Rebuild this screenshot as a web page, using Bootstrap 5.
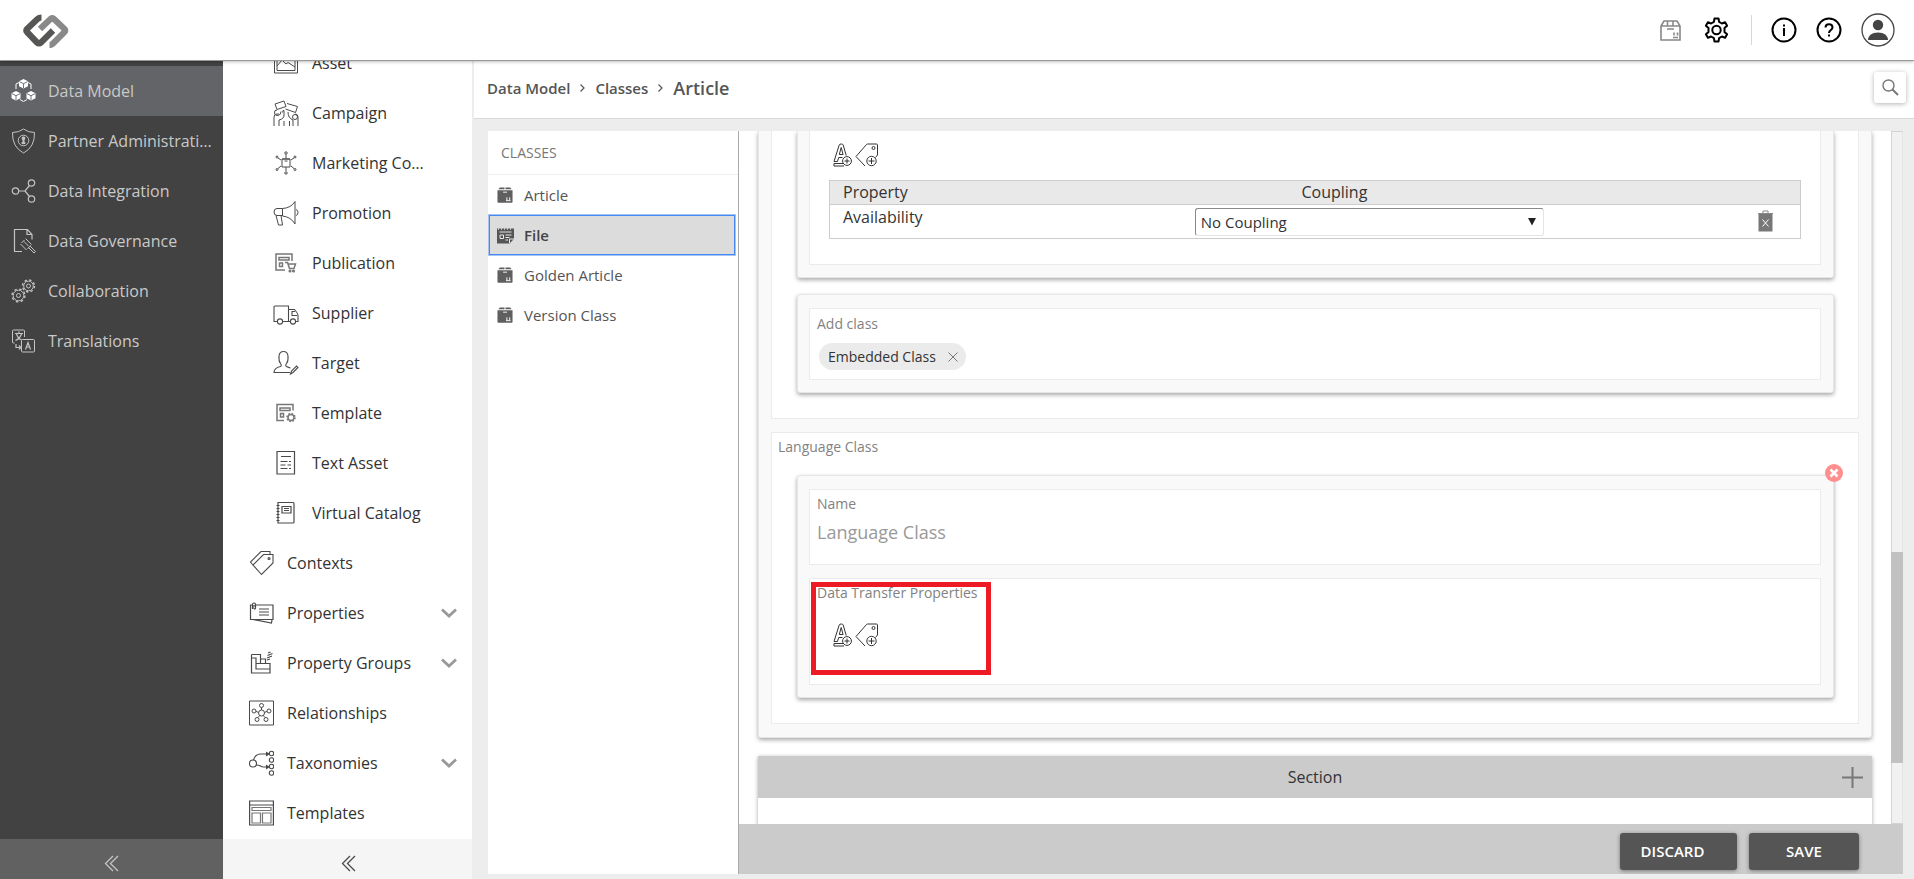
<!DOCTYPE html>
<html lang="en">
<head>
<meta charset="utf-8">
<meta name="viewport" content="width=device-width, initial-scale=1">
<title>Data Model - Classes - Article</title>
<link href="https://cdn.jsdelivr.net/npm/bootstrap@5.3.0/dist/css/bootstrap.min.css" rel="stylesheet">
<style>
body { font-family: "Open Sans", "Noto Sans", sans-serif; font-size: 16px; line-height: 24px; color: #333; background: #ededed; }
svg { fill: none; flex: none; display: block; }
svg:not([stroke]) { stroke: currentColor; }
a { color: inherit; text-decoration: none; }
button { color: inherit; }
.plain-btn { background: none; border: 0; padding: 0; }
.topbar { height: 61px; background: #fff; border-bottom: 1px solid #999; box-shadow: 0 1px 3px rgba(0,0,0,.25); z-index: 5; position: relative; padding: 0 19px 0 20px; }
.topbar-tools { gap: 19px; }
.topbar-divider { width: 1px; height: 30px; background: #d8d8d8; margin-left: 3px; }
.side-main { width: 223px; background: #424242; color: #c9c9c9; }
.side-main .entries { padding-top: 5px; }
.side-main a { height: 50px; padding: 0 8px 0 11px; gap: 12px; }
.side-main a.active { background: #636467; }
.side-main svg { color: #c4c4c4; }
.side-main a.active svg { color: #fff; }
.fold-btn { height: 40px; background: #616161; color: #bbb; border: 0; padding-top: 10px; }
.side-sub { width: 249px; background: #fff; }
.side-sub .entries { padding-bottom: 1px; }
.side-sub a { height: 50px; padding: 0 15px 0 26px; gap: 13px; flex: none; }
.side-sub a.nested { padding: 0 40px 0 50px; }
.side-sub svg { color: #4a4a4a; }
.side-sub svg.caret { color: #999; margin-left: auto; }
.side-sub .fold-btn { height: 41px; background: #f5f5f5; color: #777; padding-left: 8px; }
.crumbs { height: 58px; background: #fff; border-bottom: 1px solid #d9d9d9; margin-left: 2px; padding: 0 8px 4px 13px; color: #555; font-size: 15px; font-weight: 600; gap: 10px; }
.crumbs .current { font-size: 18px; }
.search-btn { width: 32px; height: 31px; border: 0; border-radius: 3px; background: #fff; color: #777; box-shadow: 0 1px 5px rgba(0,0,0,.3); }
.work { padding: 12px 11px 5px 16px; }
.class-panel { width: 251px; background: #fff; border-right: 1px solid #aaa; color: #555; font-size: 15px; }
.class-panel h2 { font-size: 14px; line-height: 44px; height: 44px; color: #777; padding-left: 13px; border-bottom: 1px solid #eee; margin: 0; font-weight: 400; }
.class-panel a { height: 40px; padding-left: 9px; gap: 11px; margin-right: 1px; }
.class-panel a.active { background: #dcdcdc; border: 2px solid #4688f1; outline: 1px solid #a5c3f5; outline-offset: -1px; padding-left: 7px; gap: 10px; height: 42px; margin: -1px 2px -1px 0; font-weight: 600; color: #444; }
.canvas { background: #fff; padding: 0 19px; }
.panel-card { background: #f9f9f9; border: 1px solid #e6e6e6; border-radius: 3px; box-shadow: 0 2px 4px rgba(0,0,0,.34); }
.panel-card.outer { padding: 0 12px 13px; border-top: 0; border-radius: 0 0 3px 3px; margin-bottom: 18px; }
.panel-card.inner { padding: 13px 12px 12px 11px; margin: 0 24px 0 25px; }
.panel-card.inner.cut { border-top: 0; padding-top: 0; border-radius: 0 0 3px 3px; }
.field-box { background: #fff; border: 1px solid #ebebeb; }
.field-box.cut { border-top: 0; }
.group-box { padding-bottom: 25px; }
.group-box + .group-box { margin-top: 13px; }
.group-label { padding: 4px 6px 18px; }
.table-field { padding: 12px 19px 25px; }
.chip-field { padding: 5px 7px 9px; }
.chip-field .field-label { margin-bottom: 5px; }
.name-field { padding: 4px 7px 19px; }
.transfer-field { padding: 4px 7px 37px; margin-top: 13px; }
.transfer-field .icon-row { margin: 20px 0 0 16px; }
.table-field .icon-row { margin: 0 0 13px 4px; }
.field-label { display: block; font-size: 14px; line-height: 20px; color: #828282; font-weight: 400; margin: 0; }
.icon-row { gap: 3px; color: #333; }
.name-input { border: 0; padding: 0; width: 100%; font-size: 18px; line-height: 26px; color: #999; background: none; margin-top: 5px; }
.name-input::placeholder { color: #999; opacity: 1; }
.chip { background: #ebebeb; border-radius: 14px; height: 27px; font-size: 14px; margin: 4px 0 0 2px; padding: 0 8px 0 9px; gap: 12px; color: #333; }
.prop-table { table-layout: fixed; width: 100%; border: 1px solid #ccc; border-collapse: collapse; margin: 0; }
.prop-table th { background: #e9e9e9; font-weight: 400; height: 24px; padding: 0; border-bottom: 1px solid #ccc; line-height: 23px; }
.prop-table td { height: 34px; padding: 0; vertical-align: top; }
.prop-table th:first-child, .prop-table td:first-child { padding-left: 13px; }
.prop-table td.select-cell { padding: 3px 4px 0 6px; }
.prop-table select { appearance: none; display: block; width: 100%; height: 28px; border: 1px solid #e4e4e4; border-top-color: #888; border-left-color: #888; border-radius: 3px; background: #fff; font-size: 15px; padding: 0 5px; color: #333; }
.select-arrow { position: absolute; right: 8px; top: 9px; width: 8px; height: 9px; }
.trash-btn { margin: 4px 27px 0 auto; }
.remove-badge { position: absolute; top: -12px; right: -10px; width: 18px; height: 18px; }
.highlight { position: absolute; left: 1px; top: 3px; width: 180px; height: 93px; border: 5px solid #ed1c24; }
.section-head { background: #cbcbcb; height: 42px; padding: 0 9px 0 30px; color: #333; }
.section-card { background: #fff; box-shadow: 0 1px 4px rgba(0,0,0,.35); height: 120px; flex: none; }
.scroll-track { width: 12px; background: #f1f1f1; border: 1px solid #d3d3d3; border-right-color: #e4e4e4; padding-top: 420px; }
.scroll-thumb { height: 211px; margin: 0 -1px; background: #c1c1c1; }
.action-bar { height: 50px; background: #cbcbcb; padding: 9px 44px 0 0; gap: 12px; }
.action-bar button { height: 37px; border: 0; border-radius: 3px; background: #555; color: #fff; font-size: 15px; font-weight: 600; padding: 0 0 2px; box-shadow: 0 1px 4px rgba(0,0,0,.4); }
.action-bar .btn-discard { width: 117px; padding-right: 12px; }
.action-bar .btn-save { width: 110px; }
</style>
</head>
<body class="vh-100 overflow-hidden d-flex flex-column">

<svg width="0" height="0" class="position-absolute" aria-hidden="true">
  <symbol id="carton" viewBox="0 0 17 17"><path d="M3 .5h5v2H1.500z M9 .5h5l1.500 2H9z M.5 3.500h16V16a.8.8 0 0 1-.8.8H1.300a.8.800 0 0 1-.8-.8z" fill="#5f5f5f" stroke="none"/><path d="M6.500 5.500h4M10.500 11v3M13.500 11v3M9.500 14.500h5" stroke="#fff"/></symbol>
  <symbol id="add-attr" viewBox="0 0 19 24"><path d="M1 18.500 6.200 2Q6.500 1 8.200 1T10.200 2L13.200 12.500M1 18.500H4.500L5.700 14.500H9.500M6.300 11.500 8.200 4.500l1.900 7zM10 20.500H1V23h10"/><circle cx="14" cy="18" r="4.400"/><path d="M11.500 18h5M14 15.500v5"/></symbol>
  <symbol id="add-tag" viewBox="0 0 24 24"><path d="m10 23-9-9.500L11.500 1.500Q12 1 12.500 1H21.500q1 0 1 1v10l-2 2.500"/><circle cx="18.500" cy="5" r="1.500"/><circle cx="16.500" cy="18" r="4.700"/><path d="M13.500 18h6M16.500 15v6"/></symbol>
  <symbol id="caret" viewBox="0 0 16 10"><path d="m1 1.500 7 6.500 7-6.500" stroke-width="2.800"/></symbol>
  <symbol id="fold" viewBox="0 0 15 17"><path d="M9 1 1.500 8.500 9 16M14 1 6.500 8.500 14 16" stroke-width="1.300"/></symbol>
  <symbol id="sep" viewBox="0 0 5 9"><path d="M.5 1.500 4 5 .5 8.500" stroke-width="1.200"/></symbol>
</svg>

<header class="topbar d-flex align-items-center flex-shrink-0">
  <a href="#" aria-label="Home"><svg width="50" height="36" viewBox="0 0 50 36" stroke-width="6.200" stroke-linejoin="round"><path d="M29.500 33q2 0 3.500-1.500L44.500 20q1.500-1.500 0-3L34 7q-1.500-1.500-3.500 0L20 17" stroke="#898989"/><path d="M21.500 5.500q-2.500 0-4 1.500L7 17q-1.500 1.500 0 3l10 10.500q2 2 4 0L33 18.500" stroke="#565654"/></svg></a>
  <div class="topbar-tools d-flex align-items-center ms-auto">
    <button class="plain-btn me-1" aria-label="Package"><svg width="21" height="21" viewBox="0 0 21 21" stroke="#888" stroke-width="1.600"><path d="M4 1h13l3 5v14H1V6zM1 6h19M7.500 6V1M13 6V1M7 9h7M14 12.500v3M17.500 12.500v3M13 17.500h5"/></svg></button>
    <button class="plain-btn" aria-label="Settings"><svg width="25" height="26" viewBox="0 0 25 26" stroke="#000" stroke-width="2" stroke-linejoin="round"><path d="M10.500 1.500h4l.6 3.400 2.800 1.600 3.200-1.200 2 3.400-2.600 2.300v4l2.600 2.300-2 3.400-3.200-1.200-2.800 1.600-.6 3.400h-4l-.6-3.400-2.800-1.600-3.200 1.200-2-3.400L4.500 15v-4L1.900 8.700l2-3.400 3.200 1.200 2.800-1.600z"/><circle cx="12.500" cy="13" r="4.200"/></svg></button>
    <div class="topbar-divider"></div>
    <button class="plain-btn" aria-label="Information"><svg width="26" height="26" viewBox="0 0 26 26" stroke="#000" stroke-width="2"><circle cx="13" cy="13" r="11.500"/><path d="M13 11v8M13 7.500v2"/></svg></button>
    <button class="plain-btn" aria-label="Help"><svg width="26" height="26" viewBox="0 0 26 26" stroke="#000" stroke-width="2"><circle cx="13" cy="13" r="11.500"/><path d="M9.500 10.500c0-4.500 7-4.500 7 0 0 2.500-3.500 2.500-3.500 5.500M13 17.500v2"/></svg></button>
    <button class="plain-btn" aria-label="Account"><svg width="34" height="34" viewBox="0 0 34 34" stroke="#444" stroke-width="1.300"><circle cx="17" cy="17" r="16"/><circle cx="17" cy="12" r="5.200" fill="#444" stroke="none"/><path d="M7 27c0-4.500 4-7.500 10-7.500s10 3 10 7.500z" fill="#444" stroke="none"/></svg></button>
  </div>
</header>

<div class="d-flex flex-fill overflow-hidden">
  <nav class="side-main d-flex flex-column flex-shrink-0">
    <div class="entries flex-fill">
      <a href="#" class="active d-flex align-items-center"><svg width="25" height="24" viewBox="0 0 25 24"><path d="M8 3.500 5 5v5M17 3.500 20 5v5M9 20.500l3.500 2 3.500-2" /><path d="m12.500 0 4.500 2.200v5l-4.500 2.300L8 7.200v-5zM5 12l4.500 2.200v5L5 21.500.5 19.200v-5zM20 12l4.500 2.200v5L20 21.500l-4.500-2.300v-5z" fill="currentColor" stroke="none"/><path d="m8.500 2.700 4 2 4-2M12.500 4.700V9M1 14.700l4 2 4-2M5 16.700V21M16 14.700l4 2 4-2M20 16.700V21" stroke="#636467" stroke-width=".9"/></svg><span>Data Model</span></a>
      <a href="#" class="d-flex align-items-center"><svg width="25" height="26" viewBox="0 0 25 26"><path d="M12.500 1Q17 4.500 23.500 4.500 24 19 12.500 25 1 19 1.500 4.500 8 4.500 12.500 1z"/><circle cx="12.500" cy="12.500" r="5.300"/><path d="M12.500 8.500c2.500 0 2 2.500 1 3.600v2l1.500 1q-2.500 2.500-5 0l1.500-1v-2c-1-1.100-1.500-3.600 1-3.600z" fill="currentColor" stroke="none"/></svg><span class="text-truncate">Partner Administration</span></a>
      <a href="#" class="d-flex align-items-center"><svg width="25" height="24" viewBox="0 0 25 24" stroke-width="1.200"><circle cx="4.500" cy="12" r="3.200"/><circle cx="20.500" cy="4" r="3.200"/><circle cx="20.500" cy="20" r="3.200"/><path d="M7.700 12H14l4.500-5.500M14 12l4.500 5.500"/></svg><span>Data Integration</span></a>
      <a href="#" class="d-flex align-items-center"><svg width="25" height="26" viewBox="0 0 25 26"><path d="M11 23.500H3.500v-22h13l4.500 5v5M16 1.500v5h5" stroke-width="1.200"/><path d="m14.500 10.500 6 6M9.500 16l6 6M13.500 12 10.500 15M19.500 17.500l-3 3.500M17.500 19.500l5.500 5.500 1.500-1.500-5.500-5.500"/><path d="m13 13.500 4.500 4.500"/></svg><span>Data Governance</span></a>
      <a href="#" class="d-flex align-items-center"><svg width="25" height="24" viewBox="0 0 25 24"><circle cx="7.500" cy="16.500" r="5.300"/><circle cx="7.500" cy="16.500" r="2"/><circle cx="7.500" cy="16.500" r="6.400" stroke-width="1.400" stroke-dasharray="2.500 2.520"/><circle cx="17.500" cy="7" r="4.800"/><circle cx="17.500" cy="7" r="2"/><circle cx="17.500" cy="7" r="6" stroke-width="1.400" stroke-dasharray="2.350 2.360"/></svg><span>Collaboration</span></a>
      <a href="#" class="d-flex align-items-center"><svg width="25" height="24" viewBox="0 0 25 24"><path d="M13.500 8V2q0-1-1-1H2.500q-1 0-1 1v11q0 1 1 1h1"/><rect x="10.500" y="10.500" width="13" height="12.500" rx="1"/><path d="M4 4.500h8M8 2.500v2M10.500 5Q9 9.500 4.500 11.500M5.500 5q1.500 4.500 5 6M5 15v3.500h4M8 16.500l2 2-2 2M14.500 20.500l2.500-7 2.500 7M15.500 18h3" stroke-width="1.200"/></svg><span>Translations</span></a>
    </div>
    <button class="fold-btn d-flex justify-content-center align-items-center" aria-label="Collapse main menu"><svg width="15" height="17"><use href="#fold"/></svg></button>
  </nav>

  <nav class="side-sub d-flex flex-column flex-shrink-0">
    <div class="entries flex-fill d-flex flex-column justify-content-end overflow-hidden">
      <a href="#" class="nested d-flex align-items-center"><svg width="26" height="22" viewBox="0 0 26 22"><path d="M1.500 1.500h23v19.500h-23z"/><path d="M4 4h18v14.500H4zM4 14l5-6 4 4 2-1.500 7 4.500"/></svg><span>Asset</span></a>
      <a href="#" class="nested d-flex align-items-center"><svg width="26" height="26" viewBox="0 0 26 26"><path d="m2 4 9-3 2 5.500-9 3zM14 3.500l10.500 3-2 6L12.500 9M1 26v-9q0-3 3-3h2M6 26v-6q5-1 5-5V10.500q-1-1-1.500 2M11 26v-5M25 26v-9q0-3-3-3M20 26v-6q-5-2-5-8M16.500 26v-5M4 10q-3 0-2.500 3t3.500 2.500 3-4"/><circle cx="22" cy="17" r="2.500"/></svg><span>Campaign</span></a>
      <a href="#" class="nested d-flex align-items-center"><svg width="26" height="26" viewBox="0 0 26 26"><path d="M9 9h8v8H9zM9 9h8M11.500 11h3M13 9V4.500M13 17v4M8 10 5 8M18 10l3-2M8 16l-3 2.500M18 16l3 2.500"/><circle cx="13" cy="3" r="1.200"/><circle cx="13" cy="23" r="1.200"/><circle cx="4" cy="7" r="1"/><circle cx="22" cy="7" r="1"/><circle cx="4" cy="19.500" r="1"/><circle cx="22" cy="19.500" r="1"/></svg><span class="text-truncate">Marketing Content</span></a>
      <a href="#" class="nested d-flex align-items-center"><svg width="26" height="26" viewBox="0 0 26 26"><path d="M9.500 8.500Q18 8 22 1.500V24q-4-7-12.500-8zM9.500 8.500H4Q1 8.500 1 12t3 3.500h5.500M3 15.500 5.500 25h4L8 15.500M23 9.500q2 .5 2 3t-2 3"/></svg><span>Promotion</span></a>
      <a href="#" class="nested d-flex align-items-center"><svg width="26" height="26" viewBox="0 0 26 26" stroke="#777" stroke-width="1.500"><path d="M12 20H3V4h16v7M6 7.500h10v2.500H6zM6.500 13h3v3.500h-3zM12 12.500h2.500l2 6H21l1.500-4.500h-7" /><circle cx="17" cy="21" r=".8"/><circle cx="20.500" cy="21" r=".8"/></svg><span>Publication</span></a>
      <a href="#" class="nested d-flex align-items-center"><svg width="26" height="26" viewBox="0 0 26 26" stroke-width="1.100"><path d="M5 21.500H1V7q0-1 1-1h13.500v15.500M9.500 21.500H18M15.500 9.500h6q3.500 4 3.500 6v6h-2M24 15.500h-5v-4h3"/><circle cx="7" cy="21.500" r="2.600"/><circle cx="20" cy="21.500" r="2.600"/></svg><span>Supplier</span></a>
      <a href="#" class="nested d-flex align-items-center"><svg width="26" height="26" viewBox="0 0 26 26" stroke-width="1.100"><path d="M17 22.500H1q0-4.500 6.500-6 1.500-1 0-3Q5.500 11 6 6q.5-4.500 4.500-4.500T15 6q.5 5-1.500 7.500-1.500 2 0 3 2 1 4 1.500M17.500 24l1-3 5-5 1.500 1.500-5 5z"/></svg><span>Target</span></a>
      <a href="#" class="nested d-flex align-items-center"><svg width="26" height="26" viewBox="0 0 26 26" stroke="#777" stroke-width="1.500"><path d="M11 20.500H4V4.500h16v6M7 8h10v2.500H7zM7.500 13.500h3V17h-3z"/><circle cx="18" cy="17.500" r="3"/><circle cx="18" cy="17.500" r="4" stroke-dasharray="1.600 1.540"/></svg><span>Template</span></a>
      <a href="#" class="nested d-flex align-items-center"><svg width="26" height="26" viewBox="0 0 26 26"><path d="M4 1.500h17.500v22.500H4z" stroke-width="1.200"/><path d="M8 6.500h10M7.500 11.500h7M16 11.500h2M7.500 15h5M14.500 15h3.500M7.500 18.500h7M16 18.500h2" stroke-width="1.200"/></svg><span>Text Asset</span></a>
      <a href="#" class="nested d-flex align-items-center"><svg width="26" height="26" viewBox="0 0 26 26"><path d="M5 2.500h15q1 0 1 1V22q0 1-1 1H5zM9 6.500h9v6.500H9zM11 8.500h5M11 10.500h5" stroke-width="1.200"/><path d="M3.500 5.500h3M3.500 8.500h3M3.500 11.500h3M3.500 14.500h3M3.500 17.500h3M3.500 20.500h3"/></svg><span>Virtual Catalog</span></a>
      <a href="#" class="d-flex align-items-center"><svg width="25" height="26" viewBox="0 0 25 26" stroke-width="1.100"><path d="M12.500 24.500 4 15 14.500 4.500h9.500V13zM4 15l-2.500-3L12 1.500h9v3"/><circle cx="20" cy="8.500" r="1"/></svg><span>Contexts</span></a>
      <a href="#" class="d-flex align-items-center"><svg width="25" height="24" viewBox="0 0 25 24" stroke-width="1.200"><path d="M3 4H1.500v14.500H24V4H7M4 18.500 22.500 22l.5-3.500M10 8h10M10 11h10M10 14h10M3.500 8V3.500q0-1.500 1.500-1.500t1.500 1.500V7q0 1-.8 1T5 7V4"/></svg><span>Properties</span><svg class="caret" width="16" height="10"><use href="#caret"/></svg></a>
      <a href="#" class="d-flex align-items-center"><svg width="25" height="26" viewBox="0 0 25 26" stroke-width="1.200"><path d="M2.500 4.500h9V9h5v4.500M2.500 4.500v18.500h18.500v-4H7V8H2.500M7 13.500h14V19M11.500 9v4.500"/><path d="m18 8 5-2M18.500 5.500l5-2M19 3l2.500-1M18 10l3-1" /></svg><span>Property Groups</span><svg class="caret" width="16" height="10"><use href="#caret"/></svg></a>
      <a href="#" class="d-flex align-items-center"><svg width="25" height="26" viewBox="0 0 25 26"><path d="M.5 1h24v24H.5z"/><circle cx="12.500" cy="13" r="3"/><circle cx="12.500" cy="5.500" r="2"/><circle cx="5" cy="11" r="2"/><circle cx="20" cy="11" r="2"/><circle cx="8" cy="19.500" r="2"/><circle cx="17" cy="19.500" r="2"/><path d="M12.500 7.500V10M7 11.500l2.500.8M18 11.500l-2.500.8M9 17.500l2-2.200M16 17.500l-2-2.200"/></svg><span>Relationships</span></a>
      <a href="#" class="d-flex align-items-center"><svg width="25" height="26" viewBox="0 0 25 26" stroke-width="1.100"><circle cx="4" cy="13.500" r="3.500"/><circle cx="22.500" cy="3.500" r="2.200"/><circle cx="22.500" cy="10" r="2.200"/><circle cx="22.500" cy="16.500" r="2.200"/><circle cx="22.500" cy="23" r="2.200"/><path d="M4.500 10Q6 4 12 4h7.500M7 15q3 0 4.500 1t3 1h5M17.500 2.500v3L20 4zM17.500 15.500v3l2.500-1.500z"/></svg><span>Taxonomies</span><svg class="caret" width="16" height="10"><use href="#caret"/></svg></a>
      <a href="#" class="d-flex align-items-center"><svg width="25" height="26" viewBox="0 0 25 26" stroke-width="1.200"><path d="M.6 1h23.800v24H.6zM.6 5h23.800"/><path d="M3 7.500h19v3H3zM3 13h8.500v10H3zM13.500 13H22v10h-8.500z" stroke="#777"/></svg><span>Templates</span></a>
    </div>
    <button class="fold-btn d-flex justify-content-center align-items-center" aria-label="Collapse sub menu"><svg width="15" height="17"><use href="#fold"/></svg></button>
  </nav>

  <div class="flex-fill d-flex flex-column overflow-hidden">
    <div class="crumbs d-flex align-items-center flex-shrink-0">
      <a href="#">Data Model</a><svg width="5" height="9"><use href="#sep"/></svg><a href="#">Classes</a><svg width="5" height="9"><use href="#sep"/></svg><span class="current">Article</span>
      <button class="search-btn ms-auto d-flex justify-content-center align-items-center" aria-label="Search"><svg width="17" height="17" viewBox="0 0 17 17"><circle cx="6.500" cy="6.500" r="5.500" stroke-width="1.400"/><path d="m10.500 10.500 5.500 5.500" stroke-width="2"/></svg></button>
    </div>

    <div class="work d-flex flex-fill overflow-hidden">
      <aside class="class-panel flex-shrink-0">
        <h2>CLASSES</h2>
        <a href="#" class="d-flex align-items-center"><svg width="16" height="16"><use href="#carton"/></svg>Article</a>
        <a href="#" class="active d-flex align-items-center"><svg width="17" height="17" viewBox="0 0 17 17"><path d="M0 1.500h17V12l-4.500 4.500H0z" fill="#555" stroke="none"/><path d="M1.500 0v3M4.500 0v3M7.500 0v3M10.500 0v3M13.500 0v3" stroke="#dcdcdc" stroke-width=".8"/><path d="M2.500 5h12M8.500 8h6M8.500 10.500h4M8.500 13H11M3 8h3.500v3.500H3zM12.500 16v-4H17" stroke="#e8e8e8"/></svg>File</a>
        <a href="#" class="d-flex align-items-center"><svg width="16" height="16"><use href="#carton"/></svg>Golden Article</a>
        <a href="#" class="d-flex align-items-center"><svg width="16" height="16"><use href="#carton"/></svg>Version Class</a>
      </aside>

      <div class="flex-fill d-flex flex-column overflow-hidden">
        <div class="d-flex flex-fill overflow-hidden">
          <main class="canvas flex-fill d-flex flex-column overflow-hidden">
            <div class="panel-card outer flex-shrink-0">
              <div class="field-box group-box cut">
                <div class="panel-card inner cut mb-3">
                  <div class="field-box table-field cut">
                    <div class="icon-row d-flex"><button class="plain-btn" aria-label="Add attribute"><svg width="19" height="24"><use href="#add-attr"/></svg></button><button class="plain-btn" aria-label="Add tag"><svg width="24" height="24"><use href="#add-tag"/></svg></button></div>
                    <table class="prop-table">
                      <colgroup><col style="width:37%"><col style="width:30%"><col style="width:7%"><col style="width:26%"></colgroup>
                      <thead><tr><th>Property</th><th class="text-center">Coupling</th><th></th><th></th></tr></thead>
                      <tbody><tr><td>Availability</td>
                        <td colspan="2" class="select-cell"><div class="position-relative"><select aria-label="Coupling for Availability"><option>No Coupling</option></select><svg class="select-arrow" viewBox="0 0 8 9"><path d="M0 1h8L4 8.500z" fill="#222" stroke="none"/></svg></div></td>
                        <td><button class="plain-btn trash-btn d-block" aria-label="Delete"><svg width="15" height="24" viewBox="0 0 15 24"><path d="M5 4V2h5v2M0 4.500h15" stroke="#888"/><path d="M.5 5h14v17.500H.5z" fill="#777" stroke="none"/><path d="m4.500 10.500 6 7M10.500 10.500l-6 7" stroke="#fff"/></svg></button></td></tr></tbody>
                    </table>
                  </div>
                </div>
                <div class="panel-card inner">
                  <div class="field-box chip-field">
                    <span class="field-label">Add class</span>
                    <div class="d-flex"><span class="chip d-flex align-items-center">Embedded Class<button class="plain-btn" aria-label="Remove Embedded Class"><svg width="10" height="10" viewBox="0 0 10 10" stroke="#777"><path d="m.5.5 9 9M9.500.5l-9 9"/></svg></button></span></div>
                  </div>
                </div>
              </div>

              <div class="field-box group-box">
                <span class="field-label group-label">Language Class</span>
                <div class="panel-card inner position-relative">
                  <button class="plain-btn remove-badge" aria-label="Remove language class"><svg width="18" height="18" viewBox="0 0 18 18"><circle cx="9" cy="9" r="9" fill="#ff8f8f" stroke="none"/><path d="m5.500 5.500 7 7M12.500 5.500l-7 7" stroke="#fff" stroke-width="2.600"/></svg></button>
                  <div class="field-box name-field">
                    <label class="field-label" for="langName">Name</label>
                    <input class="name-input" id="langName" type="text" placeholder="Language Class">
                  </div>
                  <div class="field-box transfer-field position-relative">
                    <span class="field-label">Data Transfer Properties</span>
                    <div class="icon-row d-flex"><button class="plain-btn" aria-label="Add attribute"><svg width="19" height="24"><use href="#add-attr"/></svg></button><button class="plain-btn" aria-label="Add tag"><svg width="24" height="24"><use href="#add-tag"/></svg></button></div>
                    <div class="highlight"></div>
                  </div>
                </div>
              </div>
            </div>

            <section class="section-card">
              <div class="section-head d-flex align-items-center"><span class="flex-fill text-center">Section</span><button class="plain-btn" aria-label="Add section"><svg width="21" height="21" viewBox="0 0 21 21" stroke="#777" stroke-width="2"><path d="M0 10.500h21M10.500 0v21"/></svg></button></div>
            </section>
          </main>
          <div class="scroll-track flex-shrink-0"><div class="scroll-thumb"></div></div>
        </div>
        <div class="action-bar d-flex justify-content-end flex-shrink-0">
          <button class="btn-discard">DISCARD</button>
          <button class="btn-save">SAVE</button>
        </div>
      </div>
    </div>
  </div>
</div>
<script src="https://cdn.jsdelivr.net/npm/bootstrap@5.3.0/dist/js/bootstrap.bundle.min.js"></script>
</body>
</html>
